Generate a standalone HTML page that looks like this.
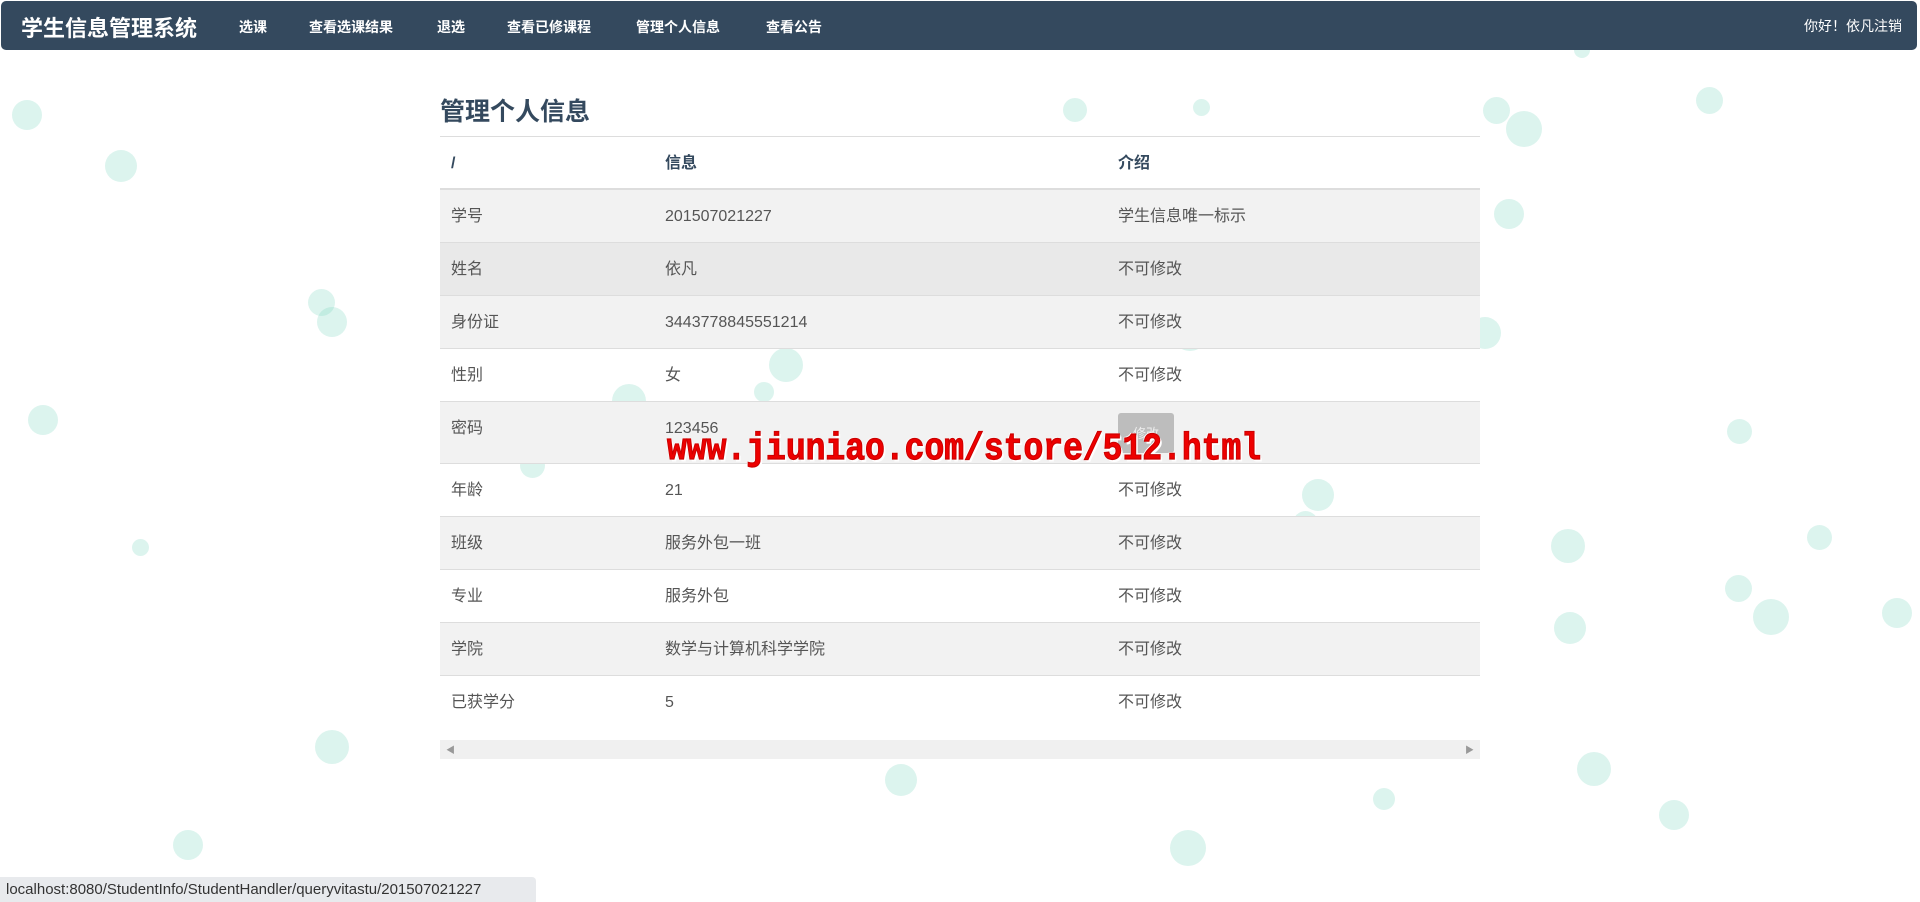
<!DOCTYPE html>
<html><head><meta charset="utf-8"><style>
*{margin:0;padding:0;box-sizing:border-box}
body{width:1920px;height:902px;overflow:hidden;background:#fff;font-family:"Liberation Sans","Noto Sans CJK SC",sans-serif;position:relative;color:#555}
.b{position:absolute;border-radius:50%;background:rgba(130,215,195,0.28)}
.nav{position:absolute;left:1px;top:1px;width:1916px;height:49px;background:#34495e;border-radius:5px;color:#fff}
.brand{position:absolute;left:20px;top:10px;font-size:22px;font-weight:bold}
.nav a{position:absolute;top:16px;font-size:14px;font-weight:bold;color:#fff}
.right{position:absolute;right:15px;top:15px;font-size:14px}
h2{position:absolute;left:440px;top:92px;font-size:25px;color:#34495e;font-weight:bold}
.tbl{position:absolute;left:440px;top:136px;width:1040px;border-top:1px solid #ddd}
.r{position:relative;height:53px;border-bottom:1px solid #ddd;font-size:16px}
.r span{position:absolute;top:0;height:53px;line-height:52px;display:flex;align-items:center}
.c1{left:11px}.c2{left:225px}.c3{left:678px}
.h{font-weight:bold;color:#34495e;border-bottom:2px solid #ddd}
.g{background:#f2f2f2}
.sb{position:absolute;left:440px;top:740px;width:1040px;height:19px;background:#f0f0f0}
.st{position:absolute;left:0;top:877px;width:536px;height:25px;background:#e8eaed;border-top-right-radius:4px;font-size:15px;color:#333;padding:4px 0 0 6px}
.wm{position:absolute;left:667px;top:428px;font-family:"Liberation Mono",monospace;font-weight:bold;font-size:33px;color:#e00;-webkit-text-stroke:1px #c00;text-shadow:1px 1px 0 #fff,-1px -1px 0 #fff,2px 2px 0 #fff;transform:scaleY(1.15);transform-origin:left top;letter-spacing:0px}
.btn{position:absolute;left:1118px;top:413px;width:56px;height:40px;background:#bdbdbd;border-radius:3px;color:#eee;font-size:13px;text-align:center;padding-top:10px}
</style></head><body>
<div class="b" style="left:12px;top:100px;width:30px;height:30px"></div>
<div class="b" style="left:105px;top:150px;width:32px;height:32px"></div>
<div class="b" style="left:308px;top:289px;width:27px;height:27px"></div>
<div class="b" style="left:317px;top:307px;width:30px;height:30px"></div>
<div class="b" style="left:28px;top:405px;width:30px;height:30px"></div>
<div class="b" style="left:132px;top:539px;width:17px;height:17px"></div>
<div class="b" style="left:315px;top:730px;width:34px;height:34px"></div>
<div class="b" style="left:173px;top:830px;width:30px;height:30px"></div>
<div class="b" style="left:1696px;top:87px;width:27px;height:27px"></div>
<div class="b" style="left:1483px;top:97px;width:27px;height:27px"></div>
<div class="b" style="left:1506px;top:111px;width:36px;height:36px"></div>
<div class="b" style="left:1494px;top:199px;width:30px;height:30px"></div>
<div class="b" style="left:1551px;top:529px;width:34px;height:34px"></div>
<div class="b" style="left:1725px;top:575px;width:27px;height:27px"></div>
<div class="b" style="left:1753px;top:599px;width:36px;height:36px"></div>
<div class="b" style="left:1554px;top:612px;width:32px;height:32px"></div>
<div class="b" style="left:1577px;top:752px;width:34px;height:34px"></div>
<div class="b" style="left:1659px;top:800px;width:30px;height:30px"></div>
<div class="b" style="left:1882px;top:598px;width:30px;height:30px"></div>
<div class="b" style="left:1807px;top:525px;width:25px;height:25px"></div>
<div class="b" style="left:1727px;top:419px;width:25px;height:25px"></div>
<div class="b" style="left:1373px;top:788px;width:22px;height:22px"></div>
<div class="b" style="left:885px;top:764px;width:32px;height:32px"></div>
<div class="b" style="left:1170px;top:830px;width:36px;height:36px"></div>
<div class="b" style="left:1063px;top:98px;width:24px;height:24px"></div>
<div class="b" style="left:1193px;top:99px;width:17px;height:17px"></div>
<div class="b" style="left:1216px;top:287px;width:30px;height:30px"></div>
<div class="b" style="left:1172px;top:315px;width:36px;height:36px"></div>
<div class="b" style="left:1302px;top:479px;width:32px;height:32px"></div>
<div class="b" style="left:754px;top:382px;width:20px;height:20px"></div>
<div class="b" style="left:520px;top:453px;width:25px;height:25px"></div>
<div class="b" style="left:1293px;top:511px;width:25px;height:25px"></div>
<div class="b" style="left:1469px;top:317px;width:32px;height:32px"></div>
<div class="b" style="left:612px;top:384px;width:34px;height:34px"></div>
<div class="b" style="left:769px;top:348px;width:34px;height:34px"></div>
<div class="b" style="left:1574px;top:42px;width:16px;height:16px"></div>
<div class="nav"><div class="brand">学生信息管理系统</div>
<a style="left:238px">选课</a><a style="left:308px">查看选课结果</a><a style="left:436px">退选</a><a style="left:506px">查看已修课程</a><a style="left:635px">管理个人信息</a><a style="left:765px">查看公告</a>
<div class="right">你好！依凡注销</div></div>
<h2>管理个人信息</h2>
<div class="tbl">
<div class="r h"><span class="c1">/</span><span class="c2">信息</span><span class="c3">介绍</span></div>
<div class="r g"><span class="c1">学号</span><span class="c2">201507021227</span><span class="c3">学生信息唯一标示</span></div>
<div class="r" style="background:#e9e9e9"><span class="c1">姓名</span><span class="c2">依凡</span><span class="c3">不可修改</span></div>
<div class="r g"><span class="c1">身份证</span><span class="c2">3443778845551214</span><span class="c3">不可修改</span></div>
<div class="r"><span class="c1">性别</span><span class="c2">女</span><span class="c3">不可修改</span></div>
<div class="r g" style="height:62px"><span class="c1">密码</span><span class="c2">123456</span></div>
<div class="r"><span class="c1">年龄</span><span class="c2">21</span><span class="c3">不可修改</span></div>
<div class="r g"><span class="c1">班级</span><span class="c2">服务外包一班</span><span class="c3">不可修改</span></div>
<div class="r"><span class="c1">专业</span><span class="c2">服务外包</span><span class="c3">不可修改</span></div>
<div class="r g"><span class="c1">学院</span><span class="c2">数学与计算机科学学院</span><span class="c3">不可修改</span></div>
<div class="r" style="border-bottom:none"><span class="c1">已获学分</span><span class="c2">5</span><span class="c3">不可修改</span></div>
</div>
<div class="btn">修改</div>
<div class="sb"><span style="position:absolute;left:6px;top:3px;font-size:9px;color:#999">◀</span><span style="position:absolute;right:6px;top:3px;font-size:9px;color:#999">▶</span></div>
<div class="wm">www.jiuniao.com/store/512.html</div>
<div class="st">localhost:8080/StudentInfo/StudentHandler/queryvitastu/201507021227</div>
</body></html>
